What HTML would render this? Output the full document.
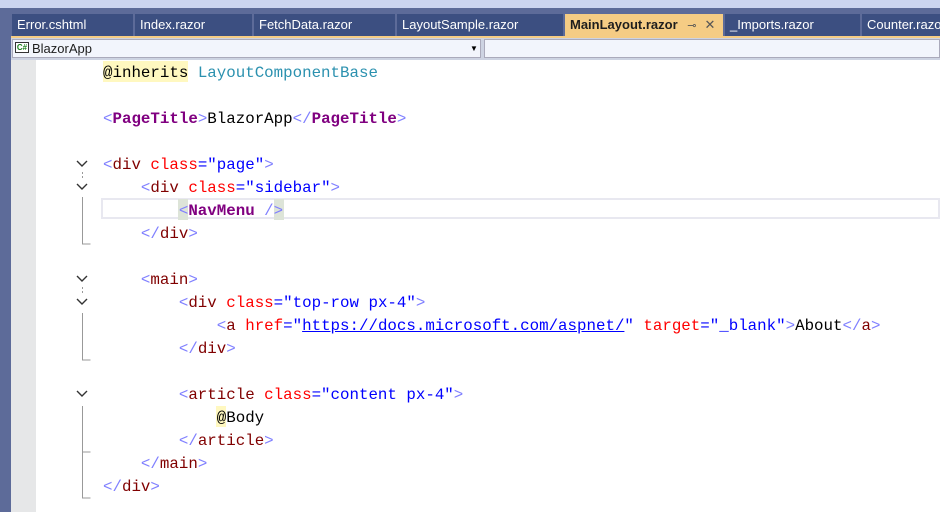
<!DOCTYPE html>
<html><head><meta charset="utf-8"><style>
*{margin:0;padding:0;box-sizing:border-box}
body{width:940px;height:512px;overflow:hidden;background:#fff;position:relative;font-family:"Liberation Sans",sans-serif}
.top{position:absolute;left:0;top:0;width:940px;height:8px;background:#ccd5f0}
.lbar{position:absolute;left:0;top:8px;width:11px;height:504px;background:#5d6b99}
.tabrow{position:absolute;left:11px;top:8px;width:929px;height:29px;background:#5d6b99}
.tab{position:absolute;top:14px;height:22px;background:#3c4f81;color:#fff;font-size:13px;line-height:22px;padding-left:5px;white-space:nowrap;overflow:hidden}
.act{background:#f5cc84;color:#1e1e1e;font-weight:bold}
.line{position:absolute;left:11px;top:36px;width:929px;height:2px;background:#f5cc84}
.dd{position:absolute;left:11px;top:38px;width:929px;height:22px;background:#cdd3e2}
.dd1{position:absolute;left:12px;top:39px;width:469px;height:19px;background:#f2f5fc;border:1px solid #aab;}
.dd2{position:absolute;left:484px;top:39px;width:456px;height:19px;background:#f2f5fc;border:1px solid #aab}
.gut{position:absolute;left:11px;top:60px;width:25px;height:452px;background:#e6e7e8}
.code{position:absolute;left:103px;font-family:"Liberation Mono",monospace;font-size:15.8px;line-height:23px;white-space:pre;color:#000}
.b{color:#8080ff}.t{color:#800000}.a{color:#ff0000}.v{color:#0000ff}.p{color:#800080;font-weight:bold}.c{color:#2b91af}
</style></head><body>
<div class="top"></div><div class="lbar"></div><div class="tabrow"></div>
<div class="tab" style="left:12px;width:121px">Error.cshtml</div>
<div class="tab" style="left:135px;width:117px">Index.razor</div>
<div class="tab" style="left:254px;width:141px">FetchData.razor</div>
<div class="tab" style="left:397px;width:166px">LayoutSample.razor</div>
<div class="tab act" style="left:565px;width:158px">MainLayout.razor <span style="font-weight:normal;font-size:11px;color:#555;margin-left:6px">⊸</span><span style="font-weight:normal;color:#555;margin-left:8px">✕</span></div>
<div class="tab" style="left:725px;width:135px">_Imports.razor</div>
<div class="tab" style="left:862px;width:78px">Counter.razor</div>
<div class="line"></div>
<div class="dd"></div><div class="dd1"></div><div class="dd2"></div>
<div style="position:absolute;left:15px;top:42px;width:14px;height:11px;border:1px solid #333;background:#fff;font-size:8px;line-height:9px;color:#1a7f1a;font-weight:bold;text-align:center">C#</div>
<div style="position:absolute;left:32px;top:39px;font-size:13px;line-height:19px;color:#1e1e1e">BlazorApp</div>
<div style="position:absolute;left:470px;top:40px;font-size:8px;line-height:17px">▼</div>
<div class="gut"></div>
<div style="position:absolute;left:101px;top:198px;width:839px;height:21px;border:2px solid #e8e8f0"></div>
<div style="position:absolute;left:103px;top:61px;width:85px;height:21px;background:#fff8c0"></div>
<div style="position:absolute;left:178px;top:199px;width:10px;height:21px;background:#dde4d8"></div>
<div style="position:absolute;left:274px;top:199px;width:10px;height:21px;background:#dde4d8"></div>
<div style="position:absolute;left:216px;top:406px;width:10px;height:21px;background:#fff8c0"></div>
<svg style="position:absolute;left:0;top:0" width="100" height="512">
<g fill="none" stroke="#333" stroke-width="1.4">
<path d="M77 161l5 5 5-5"/><path d="M77 184l5 5 5-5"/><path d="M77 276l5 5 5-5"/><path d="M77 299l5 5 5-5"/><path d="M77 391l5 5 5-5"/></g>
<g stroke="#999" fill="none"><path d="M82.5 197V244h8"/><path d="M82.5 313V360h8"/><path d="M82.5 406V452h8"/><path d="M82.5 452V498h8"/><path d="M82.5 172v8M82.5 287v8" stroke-dasharray="2 2"/></g>
<g stroke="#c8c8c8" stroke-dasharray="3 3"><path d="M107.5 176V475"/><path d="M145.5 199V244"/><path d="M145.5 291V452"/><path d="M183.5 314V337"/><path d="M183.5 406V429"/></g>
</svg>
<div class="code" style="top:62px"><span style="color:#000">@inherits</span> <span class="c">LayoutComponentBase</span>

<span class="b">&lt;</span><span class="p">PageTitle</span><span class="b">&gt;</span>BlazorApp<span class="b">&lt;/</span><span class="p">PageTitle</span><span class="b">&gt;</span>

<span class="b">&lt;</span><span class="t">div</span> <span class="a">class</span><span class="v">="page"</span><span class="b">&gt;</span>
    <span class="b">&lt;</span><span class="t">div</span> <span class="a">class</span><span class="v">="sidebar"</span><span class="b">&gt;</span>
        <span class="b">&lt;</span><span class="p">NavMenu</span> <span class="b">/&gt;</span>
    <span class="b">&lt;/</span><span class="t">div</span><span class="b">&gt;</span>

    <span class="b">&lt;</span><span class="t">main</span><span class="b">&gt;</span>
        <span class="b">&lt;</span><span class="t">div</span> <span class="a">class</span><span class="v">="top-row px-4"</span><span class="b">&gt;</span>
            <span class="b">&lt;</span><span class="t">a</span> <span class="a">href</span><span class="v">="<u>https://docs.microsoft.com/aspnet/</u>"</span> <span class="a">target</span><span class="v">="_blank"</span><span class="b">&gt;</span>About<span class="b">&lt;/</span><span class="t">a</span><span class="b">&gt;</span>
        <span class="b">&lt;/</span><span class="t">div</span><span class="b">&gt;</span>

        <span class="b">&lt;</span><span class="t">article</span> <span class="a">class</span><span class="v">="content px-4"</span><span class="b">&gt;</span>
            @Body
        <span class="b">&lt;/</span><span class="t">article</span><span class="b">&gt;</span>
    <span class="b">&lt;/</span><span class="t">main</span><span class="b">&gt;</span>
<span class="b">&lt;/</span><span class="t">div</span><span class="b">&gt;</span></div>
</body></html>
